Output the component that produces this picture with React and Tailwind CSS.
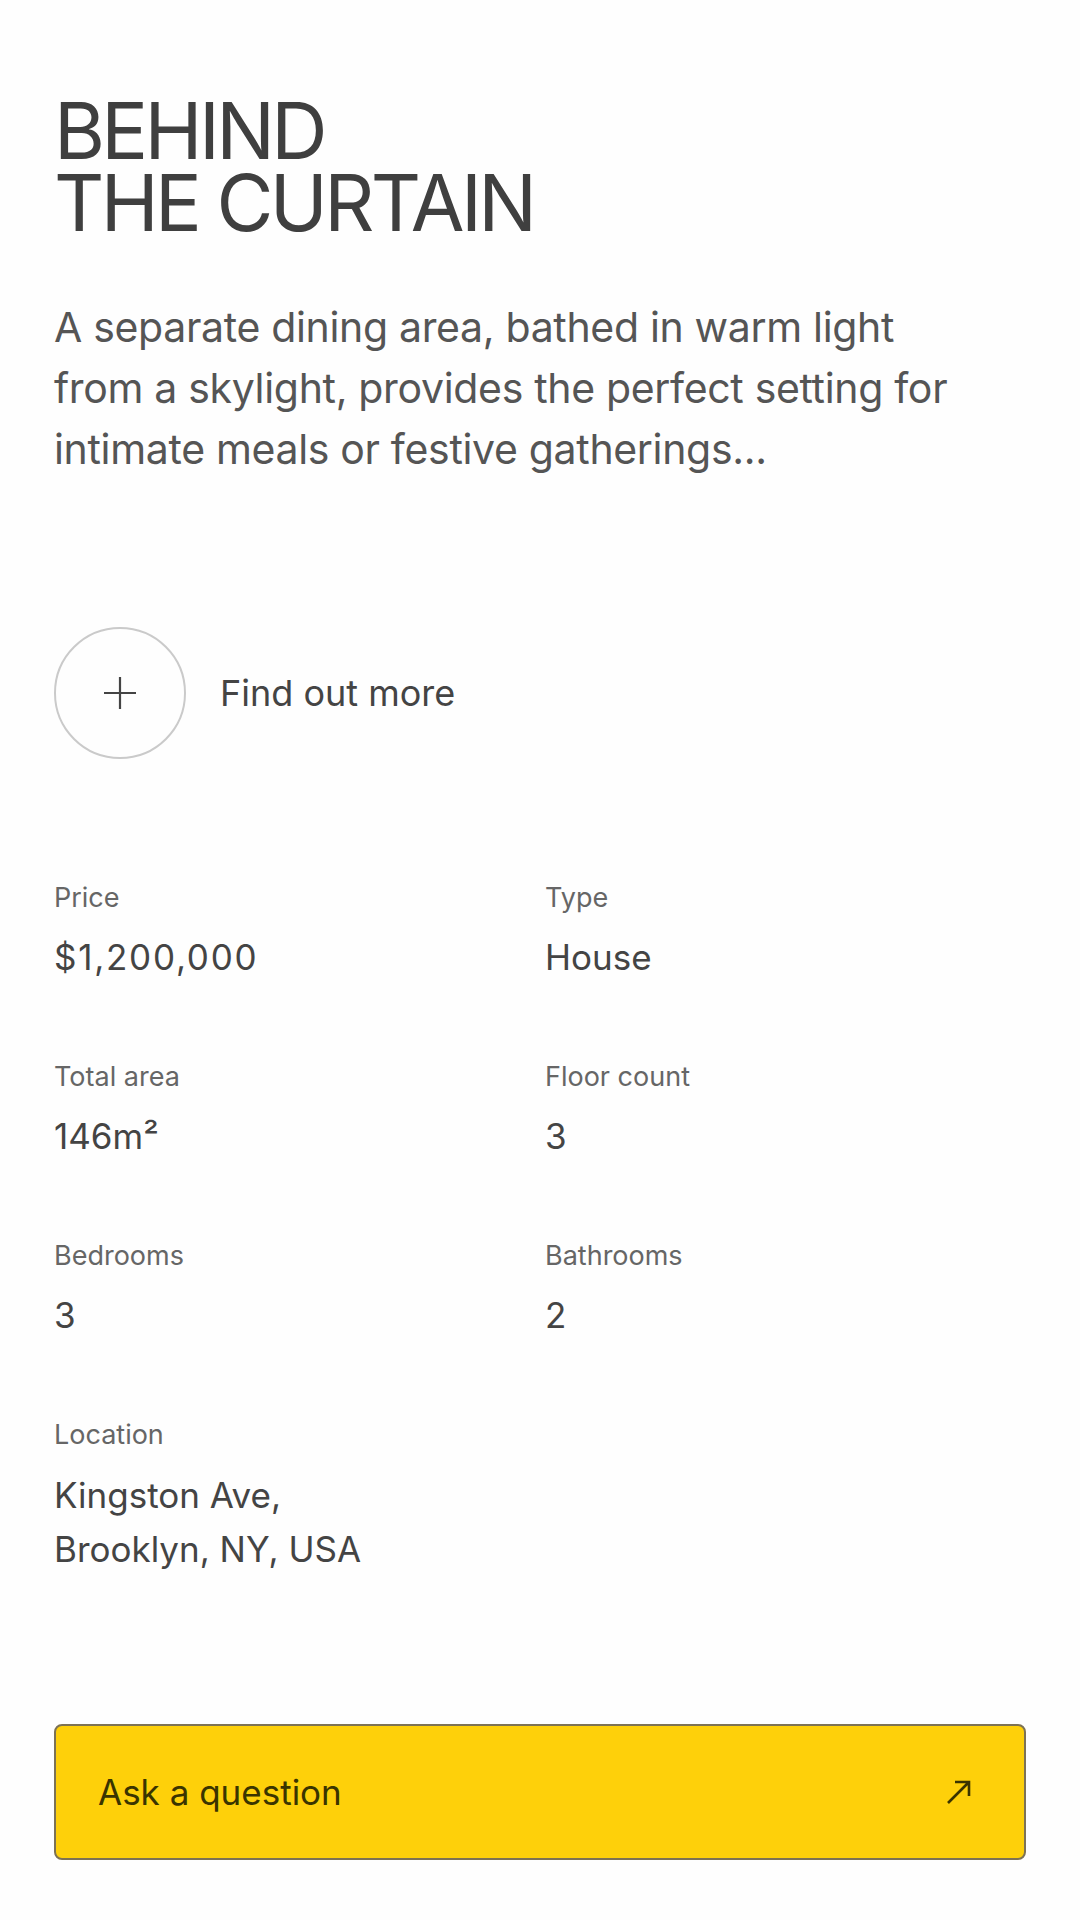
import React from "react";

const details = [
  { label: "Price", value: "$1,200,000", wide: true },
  { label: "Type", value: "House" },
  { label: "Total area", value: "146m²" },
  { label: "Floor count", value: "3" },
  { label: "Bedrooms", value: "3" },
  { label: "Bathrooms", value: "2" },
];

export default function App() {
  return (
    <div className="min-h-screen w-[1080px] bg-[#fefefe] px-[54px] pt-[95px] text-[#444] font-['Inter',sans-serif]">
      <h1 className="text-[78px] font-normal leading-[72px] tracking-[-0.047em] text-[#3f3f3f]">
        BEHIND
        <br />
        THE CURTAIN
      </h1>

      <p className="mt-[58px] whitespace-nowrap text-[41px] leading-[61px] tracking-[-0.008em] text-[#555]">
        A separate dining area, bathed in warm light
        <br />
        from a skylight, provides the perfect setting for
        <br />
        intimate meals or festive gatherings...
      </p>

      <div className="mt-[147px] flex items-center gap-[34px]">
        <div className="flex h-[132px] w-[132px] items-center justify-center rounded-full border-2 border-[#cacaca]">
          <svg width="36" height="36" viewBox="0 0 36 36" fill="none" stroke="#444" strokeWidth="2.2">
            <path d="M18 2v32M2 18h32" />
          </svg>
        </div>
        <span className="text-[36px] text-[#444]">Find out more</span>
      </div>

      <div className="mt-[124px] grid grid-cols-[491px_1fr] gap-y-[83px]">
        {details.map((d) => (
          <div key={d.label} className="flex flex-col">
            <span className="text-[27px] leading-[30px] text-[#666]">{d.label}</span>
            <span
              className={
                d.wide
                  ? "mt-[22px] text-[35px] leading-[44px] tracking-[0.05em] text-[#444]"
                  : "mt-[22px] text-[35px] leading-[44px] text-[#444]"
              }
            >
              {d.value}
            </span>
          </div>
        ))}
      </div>

      <div className="mt-[83px] flex flex-col">
        <span className="text-[27px] leading-[30px] text-[#666]">Location</span>
        <span className="mt-[18px] text-[35px] leading-[54px] text-[#444]">
          Kingston Ave,
          <br />
          Brooklyn, NY, USA
        </span>
      </div>

      <button
        type="button"
        className="mt-[148px] flex h-[136px] w-full items-center justify-between rounded-[8px] border-2 border-[#7d7254] bg-[#fed00a] pl-[42px] pr-[50px] text-left"
      >
        <span className="text-[35px] text-[#3a3400]">Ask a question</span>
        <svg width="30" height="30" viewBox="0 0 30 30" fill="none" stroke="#3a3400" strokeWidth="2.6">
          <path d="M4 26 25 5M11 5h14v14" />
        </svg>
      </button>
    </div>
  );
}
